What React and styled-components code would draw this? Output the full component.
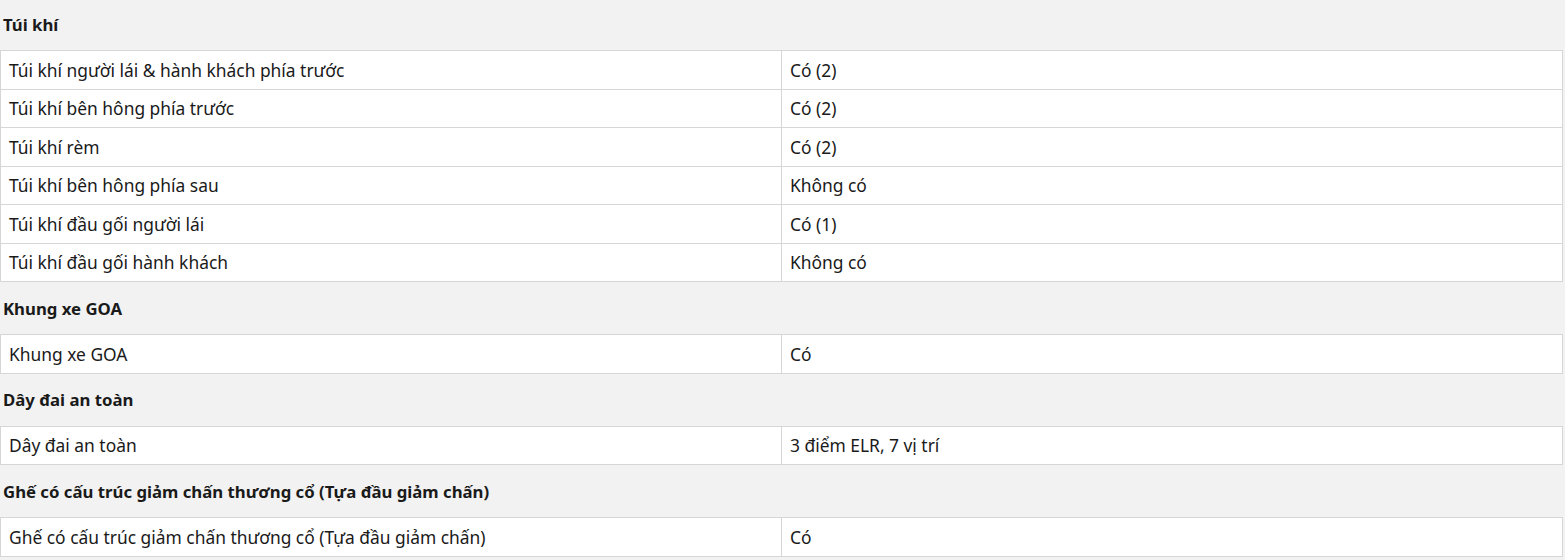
import React from 'react';
import styled, { createGlobalStyle } from 'styled-components';

const GlobalStyle = createGlobalStyle`
  html, body {
    margin: 0;
    padding: 0;
    background: #f2f2f2;
  }
  body {
    font-family: "Noto Sans", "Open Sans", sans-serif;
    color: #1a1a1a;
  }
`;

const Page = styled.div`
  width: 1563px;
  display: flex;
  flex-direction: column;
`;

const GroupTitle = styled.h3`
  margin: 0;
  height: ${p => (p.first ? '50px' : '52px')};
  display: flex;
  align-items: center;
  padding: ${p => (p.first ? '0 0 2px 3px' : '0 0 0 3px')};
  box-sizing: border-box;
  font-size: 16.75px;
  font-weight: 700;
  color: #1a1a1a;
`;

const SpecTable = styled.table`
  width: 100%;
  border-collapse: collapse;
  table-layout: fixed;
  background: #fff;
`;

const Cell = styled.td`
  border: 1px solid #d6d6d6;
  padding: 0 8px;
  height: 37.5px;
  font-size: 17.4px;
  line-height: 22px;
  color: #1a1a1a;
  vertical-align: middle;
`;

const groups = [
  {
    title: 'Túi khí',
    rows: [
      ['Túi khí người lái & hành khách phía trước', 'Có (2)'],
      ['Túi khí bên hông phía trước', 'Có (2)'],
      ['Túi khí rèm', 'Có (2)'],
      ['Túi khí bên hông phía sau', 'Không có'],
      ['Túi khí đầu gối người lái', 'Có (1)'],
      ['Túi khí đầu gối hành khách', 'Không có'],
    ],
  },
  { title: 'Khung xe GOA', rows: [['Khung xe GOA', 'Có']] },
  { title: 'Dây đai an toàn', rows: [['Dây đai an toàn', '3 điểm ELR, 7 vị trí']] },
  {
    title: 'Ghế có cấu trúc giảm chấn thương cổ (Tựa đầu giảm chấn)',
    rows: [['Ghế có cấu trúc giảm chấn thương cổ (Tựa đầu giảm chấn)', 'Có']],
  },
];

export default function App() {
  return (
    <>
      <GlobalStyle />
      <Page>
        {groups.map((g, i) => (
          <React.Fragment key={g.title}>
            <GroupTitle first={i === 0}>{g.title}</GroupTitle>
            <SpecTable>
              <tbody>
                {g.rows.map(([label, value]) => (
                  <tr key={label}>
                    <Cell>{label}</Cell>
                    <Cell>{value}</Cell>
                  </tr>
                ))}
              </tbody>
            </SpecTable>
          </React.Fragment>
        ))}
      </Page>
    </>
  );
}
